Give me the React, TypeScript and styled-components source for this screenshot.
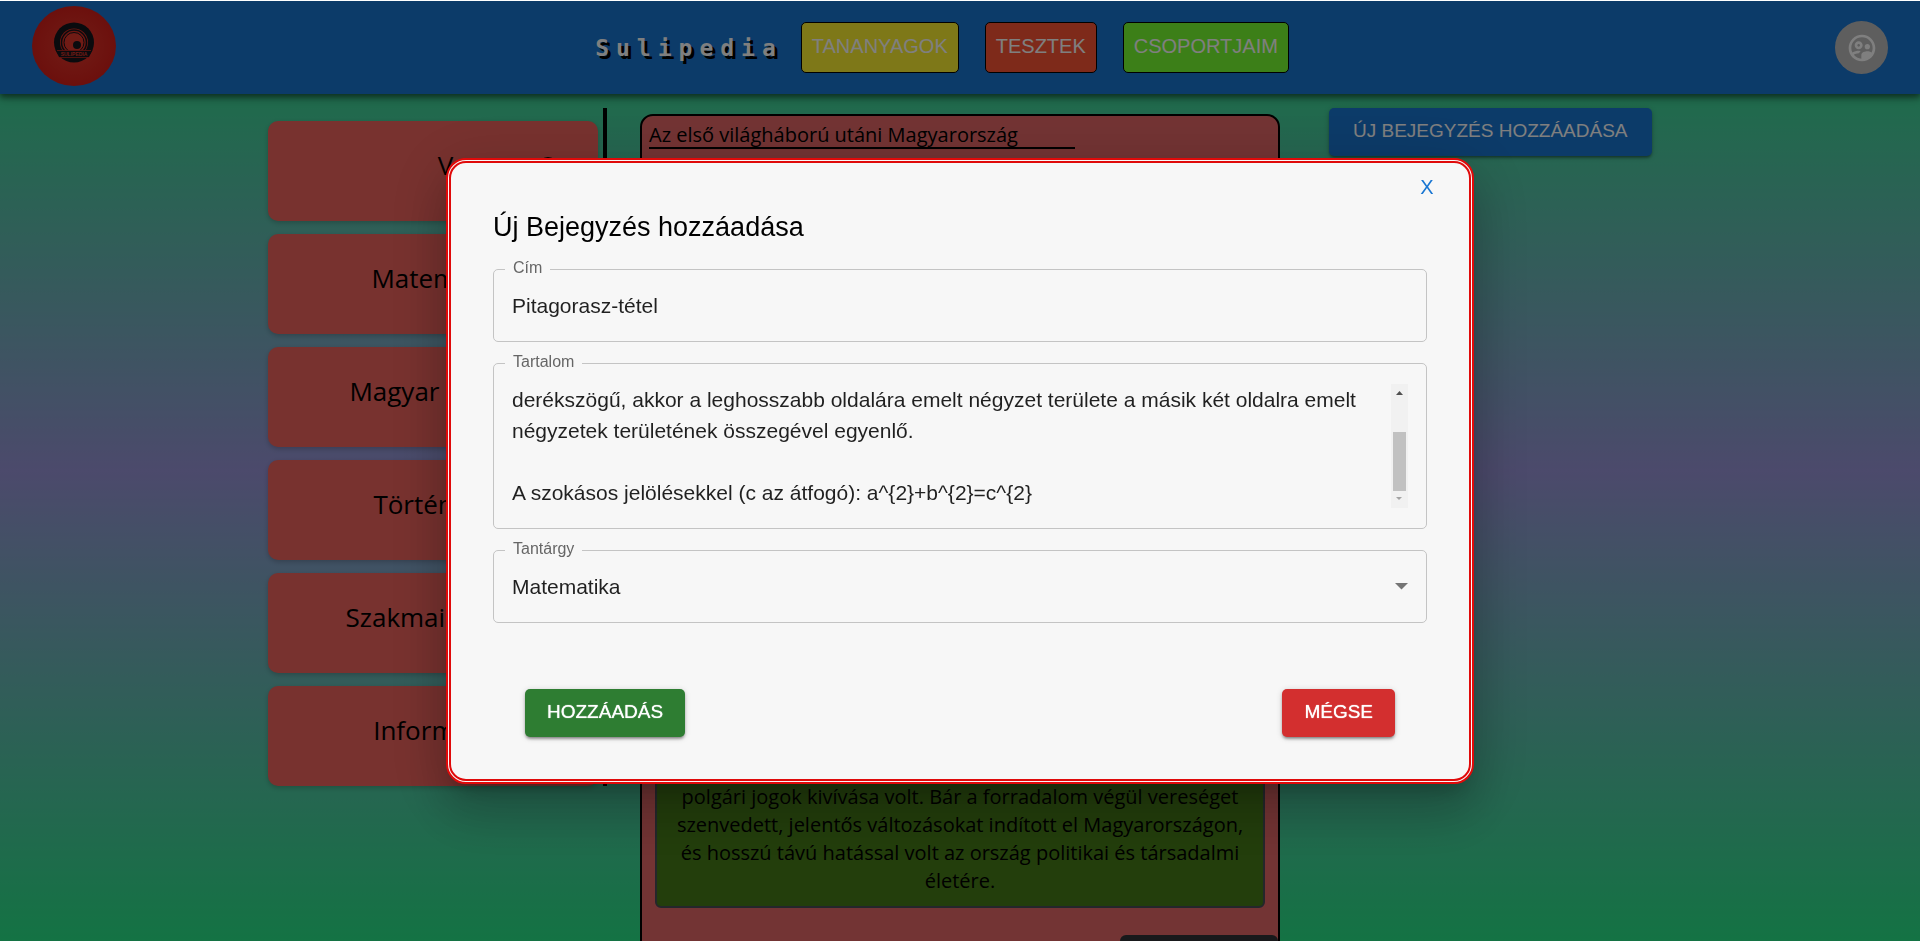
import React, { useLayoutEffect, useRef, useState } from "react";
import styled, { createGlobalStyle } from "styled-components";
import { MdOutlineSupervisedUserCircle } from "react-icons/md";

const sans = `"Liberation Sans", Arial, sans-serif`;
const humanist = `"Segoe UI", "Open Sans", "Noto Sans", sans-serif`;

const GlobalStyle = createGlobalStyle`
  *, *::before, *::after { box-sizing: border-box; }
  body { margin: 0; font-family: ${humanist}; color: #000; }
  button, input, select, textarea { font-family: inherit; }
`;

const Page = styled.div`
  height: 100vh;
  overflow: hidden;
  border-top: 1px solid #fff;
  background: linear-gradient(180deg, #28e688 0%, #9894d8 50%, #28e688 100%);
`;

const Header = styled.header`
  display: grid;
  grid-template-columns: 1fr auto 1fr;
  align-items: center;
  height: 93px;
  padding: 0 32px;
  background: #1976d2;
  box-shadow: 0 2px 5px rgba(0, 0, 0, 0.3), 0 5px 6px rgba(0, 0, 0, 0.24), 0 1px 12px rgba(0, 0, 0, 0.22);
  position: relative;
`;

const LogoLink = styled.a`
  display: block;
  width: 84px;
  height: 84px;
  svg { display: block; }
`;

const Nav = styled.nav`
  display: flex;
  align-items: center;
  gap: 26px;
  padding-right: 36px;
`;

const Brand = styled.a`
  font: 700 23px/40px "DejaVu Sans Mono", monospace;
  letter-spacing: 7px;
  color: #fff;
  text-decoration: none;
  text-shadow: 3px 3px 0 #000;
  margin-right: -8px;
`;

const NavButton = styled.button<{ $color: string }>`
  height: 51px;
  padding: 0 10px 3px;
  border: 1px solid #000;
  border-radius: 5px;
  background: ${(p) => p.$color};
  color: #fff;
  font: 400 20px/28px ${sans};
  cursor: pointer;
`;

const Avatar = styled.button`
  justify-self: end;
  display: flex;
  align-items: center;
  justify-content: center;
  width: 53px;
  height: 53px;
  padding: 0;
  border: 0;
  border-radius: 50%;
  background: #bdbdbd;
  color: #fff;
`;

const Columns = styled.main`
  display: grid;
  grid-template-columns: repeat(3, 1fr);
  align-items: start;
`;

const Sidebar = styled.aside`
  justify-self: end;
  display: flex;
  flex-direction: column;
  gap: 13px;
  margin: 14px 33px 0 0;
  padding: 13px 5px 0 0;
  border-right: 4px solid #000;
`;

const SubjectCard = styled.button<{ $end?: boolean }>`
  display: flex;
  align-items: center;
  justify-content: ${(p) => (p.$end ? "flex-end" : "center")};
  gap: 16px;
  width: 330px;
  height: 100px;
  padding: ${(p) => (p.$end ? "0 40px 12px 0" : "0 0 12px 21px")};
  border: 0;
  border-radius: 10px;
  background: #f0645e;
  color: #000;
  font-size: 26px;
  line-height: 36px;
  box-shadow: 0 2px 5px rgba(0, 0, 0, 0.2);
`;

const CardIcon = styled.svg`
  margin-top: 3px;
`;

const Post = styled.article`
  margin-top: 20px;
  border: 2px solid #000;
  border-radius: 13px;
  background: #e66868;
`;

const PostTitle = styled.h2`
  width: 67%;
  margin: 3px 7px 32px;
  padding-top: 4px;
  border-bottom: 2px solid #000;
  font-weight: 400;
  font-size: 20px;
  line-height: 24px;
`;

const PostBody = styled.div`
  display: flex;
  align-items: flex-end;
  justify-content: center;
  min-height: 727px;
  margin: 0 13px;
  padding: 12px 12px 11px;
  border: 2px solid #484f56;
  border-radius: 6px;
  background: #467c18;
  text-align: center;
  font-size: 20px;
  line-height: 28px;
  p { margin: 0; }
`;

const PostFooter = styled.footer`
  display: flex;
  justify-content: flex-end;
  padding-top: 27px;
`;

const DarkButton = styled.button`
  width: 158px;
  height: 50px;
  border: 0;
  border-radius: 6px;
  background: #303236;
  color: #fff;
`;

const ActionButton = styled.button<{ $color: string }>`
  height: 48px;
  padding: 0 24px 2px;
  border: 0;
  border-radius: 5px;
  background: ${(p) => p.$color};
  color: #fff;
  font: 400 19px/28px ${sans};
  white-space: nowrap;
  box-shadow: 0 3px 3px -2px rgba(0, 0, 0, 0.3), 0 2px 3px rgba(0, 0, 0, 0.2), 0 1px 6px rgba(0, 0, 0, 0.16);
  cursor: pointer;
`;

const StrongAction = styled(ActionButton)`
  padding: 0 22px 2px;
  text-shadow: 0 0 1px #fff;
`;

const Aside = styled.div`
  padding: 14px 0 0 49px;
`;

const Overlay = styled.div`
  position: fixed;
  inset: 1px 0 0;
  display: grid;
  place-items: center;
  background: rgba(0, 0, 0, 0.5);
`;

const Dialog = styled.form`
  width: min(1028px, 94%);
  padding: 10px 42px 42px;
  border: 5px double #e00a0a;
  border-radius: 20px;
  background: #f7f7f7;
  color: rgba(0, 0, 0, 0.87);
  font-family: ${sans};
  box-shadow: 0 14px 19px -9px rgba(0, 0, 0, 0.2), 0 30px 48px 4px rgba(0, 0, 0, 0.14), 0 11px 58px 10px rgba(0, 0, 0, 0.12);
`;

const CloseRow = styled.div`
  display: flex;
  justify-content: flex-end;
`;

const CloseButton = styled.button`
  width: 24px;
  height: 28px;
  margin-right: -12px;
  padding: 0;
  border: 0;
  background: none;
  color: #1976d2;
  font-size: 20px;
  line-height: 28px;
`;

const DialogTitle = styled.h1`
  margin: 6px 0 12px;
  color: #000;
  font-weight: 400;
  font-size: 27px;
  line-height: 40px;
`;

const Field = styled.fieldset`
  display: flex;
  min-width: 0;
  margin: 0 0 11px;
  padding: 11px 18px 20px;
  border: 1px solid #c4c4c4;
  border-radius: 5px;
`;

const Legend = styled.legend`
  margin-left: -7px;
  padding: 0 8px 2px;
  color: #666;
  font-size: 16px;
  line-height: 18px;
`;

const controlCss = `
  flex: 1;
  min-width: 0;
  margin: 0;
  padding: 0;
  border: 0;
  outline: 0;
  background: none;
  color: inherit;
  font-size: 21px;
  line-height: 31px;
`;

const TextInput = styled.input`
  ${controlCss}
  height: 31px;
`;

const TextArea = styled.textarea`
  ${controlCss}
  height: 124px;
  resize: none;
  overflow: hidden;
  white-space: pre;
`;

const Select = styled.select`
  ${controlCss}
  height: 31px;
  appearance: none;
`;

const SelectArrow = styled.svg`
  align-self: center;
  flex: none;
`;

const ScrollTrack = styled.div`
  display: flex;
  flex-direction: column;
  align-items: center;
  flex: none;
  width: 17px;
  background: #f1f1f1;
`;

const ScrollSpace = styled.div`
  flex: 1;
`;

const ScrollThumb = styled.div`
  width: 13px;
  height: 59px;
  background: #c1c1c1;
`;

const Actions = styled.div`
  display: flex;
  justify-content: space-between;
  padding: 55px 32px 0;
`;

function Logo() {
  return (
    <svg width="84" height="84" viewBox="0 0 84 84" aria-hidden="true">
      <defs>
        <radialGradient id="logo-red">
          <stop offset="0" stopColor="#e43a2e" />
          <stop offset="1" stopColor="#d8201a" />
        </radialGradient>
      </defs>
      <ellipse cx="42" cy="40" rx="42" ry="40" fill="url(#logo-red)" />
      <circle cx="42" cy="36.500" r="20" fill="#15161c" />
      <circle cx="42" cy="36.500" r="14" fill="#dc2c22" />
      <circle cx="42" cy="36.500" r="12.500" fill="none" stroke="#15161c" strokeWidth="1.500" />
      <circle cx="42" cy="36.500" r="10" fill="#e0362b" stroke="#15161c" strokeWidth="1" />
      <circle cx="45" cy="39" r="4" fill="#15161c" />
      <path d="M24 44.500h36l-3 6.500H27z" fill="#15161c" />
      <path d="M25 44.500h34M27 51.500h30" stroke="#c8281f" strokeWidth="0.800" />
      <text x="42" y="50" textAnchor="middle" fontFamily="Liberation Sans" fontSize="5" fontWeight="700" fill="#e0362b">
        SULIPEDIA
      </text>
    </svg>
  );
}

const subjects = ["Matematika", "Magyar nyelvek", "Történelem", "Szakmai tárgyak", "Informatika"];

const initialContent = [
  "A Pitagorasz-tétel az euklideszi geometria egyik állítása.",
  "A tétel kimondja, hogy ha egy háromszög",
  "derékszögű, akkor a leghosszabb oldalára emelt négyzet területe a másik két oldalra emelt",
  "négyzetek területének összegével egyenlő.",
  "",
  "A szokásos jelölésekkel (c az átfogó): a^{2}+b^{2}=c^{2}",
].join("\n");

export default function App() {
  const [title, setTitle] = useState("Pitagorasz-tétel");
  const [content, setContent] = useState(initialContent);
  const [subject, setSubject] = useState("Matematika");
  const area = useRef<HTMLTextAreaElement>(null);

  useLayoutEffect(() => {
    if (area.current) area.current.scrollTop = area.current.scrollHeight;
  }, []);

  return (
    <>
      <GlobalStyle />
      <Page>
        <Header>
          <LogoLink href="#" aria-label="Sulipedia">
            <Logo />
          </LogoLink>
          <Nav>
            <Brand href="#">Sulipedia</Brand>
            <NavButton $color="#fcf030">TANANYAGOK</NavButton>
            <NavButton $color="#fc5434">TESZTEK</NavButton>
            <NavButton $color="#78ff30">CSOPORTJAIM</NavButton>
          </Nav>
          <Avatar aria-label="Profil">
            <MdOutlineSupervisedUserCircle size={32} />
          </Avatar>
        </Header>
        <Columns>
          <Sidebar>
            <SubjectCard $end>
              Vegyes
              <CardIcon width="20" height="20" viewBox="0 0 20 20" aria-hidden="true">
                <circle cx="10" cy="10" r="9" fill="none" stroke="#000" strokeWidth="2" />
              </CardIcon>
            </SubjectCard>
            {subjects.map((name) => (
              <SubjectCard key={name}>{name}</SubjectCard>
            ))}
          </Sidebar>
          <Post>
            <PostTitle>Az első világháború utáni Magyarország</PostTitle>
            <PostBody>
              <p>
                A forradalom célja a nemzeti függetlenség és a<br />
                polgári jogok kivívása volt. Bár a forradalom végül vereséget szenvedett, jelentős változásokat
                indított el Magyarországon, és hosszú távú hatással volt az ország politikai és társadalmi életére.
              </p>
            </PostBody>
            <PostFooter>
              <DarkButton aria-label="Tovább" />
            </PostFooter>
          </Post>
          <Aside>
            <ActionButton $color="#1976d2">ÚJ BEJEGYZÉS HOZZÁADÁSA</ActionButton>
          </Aside>
        </Columns>
      </Page>
      <Overlay>
        <Dialog role="dialog" aria-labelledby="dialog-title" onSubmit={(e) => e.preventDefault()}>
          <CloseRow>
            <CloseButton type="button">X</CloseButton>
          </CloseRow>
          <DialogTitle id="dialog-title">Új Bejegyzés hozzáadása</DialogTitle>
          <Field>
            <Legend><label htmlFor="title">Cím</label></Legend>
            <TextInput id="title" value={title} onChange={(e) => setTitle(e.target.value)} />
          </Field>
          <Field>
            <Legend><label htmlFor="content">Tartalom</label></Legend>
            <TextArea id="content" ref={area} value={content} onChange={(e) => setContent(e.target.value)} />
            <ScrollTrack aria-hidden="true">
              <svg width="17" height="17" viewBox="0 0 17 17"><path d="M5 11h7L8.500 7z" fill="#505050" /></svg>
              <ScrollSpace />
              <ScrollThumb />
              <svg width="17" height="17" viewBox="0 0 17 17"><path d="M5 6h6L8 9z" fill="#a3a3a3" /></svg>
            </ScrollTrack>
          </Field>
          <Field>
            <Legend><label htmlFor="subject">Tantárgy</label></Legend>
            <Select id="subject" value={subject} onChange={(e) => setSubject(e.target.value)}>
              {subjects.map((name) => (
                <option key={name}>{name}</option>
              ))}
            </Select>
            <SelectArrow width="13" height="7" viewBox="0 0 13 7" aria-hidden="true">
              <path d="M0 0h13L6.500 6.500z" fill="#757575" />
            </SelectArrow>
          </Field>
          <Actions>
            <StrongAction type="submit" $color="#2e7d32">HOZZÁADÁS</StrongAction>
            <StrongAction type="button" $color="#d32f2f">MÉGSE</StrongAction>
          </Actions>
        </Dialog>
      </Overlay>
    </>
  );
}
